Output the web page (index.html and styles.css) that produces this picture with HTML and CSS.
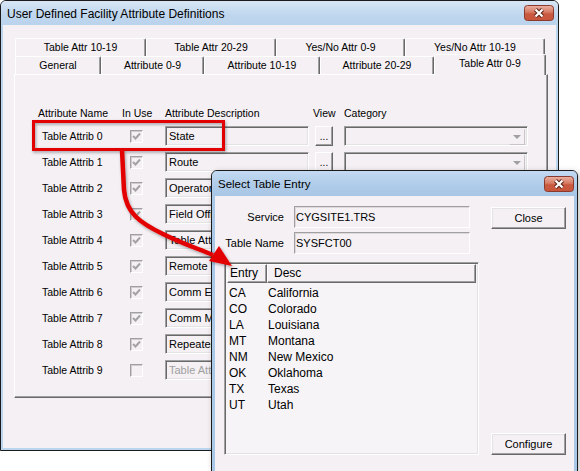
FILE: index.html
```html
<!DOCTYPE html>
<html>
<head>
<meta charset="utf-8">
<title>User Defined Facility Attribute Definitions</title>
<link rel="stylesheet" href="styles.css">
</head>
<body>
<div class="win main">
  <div class="titlebar">
    <span class="title">User Defined Facility Attribute Definitions</span>
    <svg class="xbtn" width="30" height="16" viewBox="0 0 30 16">
      <defs><linearGradient id="rg1" x1="0" y1="0" x2="0" y2="1"><stop offset="0" stop-color="#eab3a5"/><stop offset="0.45" stop-color="#d77a63"/><stop offset="0.55" stop-color="#c85a40"/><stop offset="1" stop-color="#c9553b"/></linearGradient></defs>
      <rect x="0.5" y="0.5" width="29" height="15" rx="3" fill="url(#rg1)" stroke="#8a3a2c"/>
      <path d="M11.5 4.5 L18.5 11.5 M18.5 4.5 L11.5 11.5" stroke="#5a2218" stroke-width="4.2"/>
      <path d="M11.5 4.5 L18.5 11.5 M18.5 4.5 L11.5 11.5" stroke="#fff" stroke-width="2.2"/>
    </svg>
  </div>
  <div class="client">
    <div class="tabctl">
      <div class="tabrow back">
        <div class="tab w131">Table Attr 10-19</div>
        <div class="tab w130">Table Attr 20-29</div>
        <div class="tab w129">Yes/No Attr 0-9</div>
        <div class="tab w140">Yes/No Attr 10-19</div>
      </div>
      <div class="tabrow front">
        <div class="tab w86">General</div>
        <div class="tab w103">Attribute 0-9</div>
        <div class="tab w116">Attribute 10-19</div>
        <div class="tab w114">Attribute 20-29</div>
        <div class="tab sel">Table Attr 0-9</div>
      </div>
      <div class="panel">
        <div class="grid">
          <div class="hd">Attribute Name</div><div class="hd">In Use</div><div class="hd">Attribute Description</div><div class="hd">View</div><div class="hd">Category</div>

          <div class="nm">Table Attrib 0</div><div><div class="cb"><svg width="9" height="9" viewBox="0 0 9 9"><path d="M1 4 L3.5 6.5 L8 1.5" fill="none" stroke="#a3a3a3" stroke-width="2"/></svg></div></div><div><div class="tb">State</div></div><div><div class="dots">...</div></div><div><div class="combo"><span class="dd"><span class="tri"></span></span></div></div>

          <div class="nm">Table Attrib 1</div><div><div class="cb"><svg width="9" height="9" viewBox="0 0 9 9"><path d="M1 4 L3.5 6.5 L8 1.5" fill="none" stroke="#a3a3a3" stroke-width="2"/></svg></div></div><div><div class="tb">Route</div></div><div><div class="dots">...</div></div><div><div class="combo"><span class="dd"><span class="tri"></span></span></div></div>

          <div class="nm">Table Attrib 2</div><div><div class="cb"><svg width="9" height="9" viewBox="0 0 9 9"><path d="M1 4 L3.5 6.5 L8 1.5" fill="none" stroke="#a3a3a3" stroke-width="2"/></svg></div></div><div><div class="tb">Operator</div></div><div><div class="dots"></div></div><div><div class="combo"><span class="dd"><span class="tri"></span></span></div></div>

          <div class="nm">Table Attrib 3</div><div><div class="cb"><svg width="9" height="9" viewBox="0 0 9 9"><path d="M1 4 L3.5 6.5 L8 1.5" fill="none" stroke="#a3a3a3" stroke-width="2"/></svg></div></div><div><div class="tb">Field Office</div></div><div><div class="dots"></div></div><div><div class="combo"><span class="dd"><span class="tri"></span></span></div></div>

          <div class="nm">Table Attrib 4</div><div><div class="cb"><svg width="9" height="9" viewBox="0 0 9 9"><path d="M1 4 L3.5 6.5 L8 1.5" fill="none" stroke="#a3a3a3" stroke-width="2"/></svg></div></div><div><div class="tb">Table Attrib 4</div></div><div><div class="dots"></div></div><div><div class="combo"><span class="dd"><span class="tri"></span></span></div></div>

          <div class="nm">Table Attrib 5</div><div><div class="cb"><svg width="9" height="9" viewBox="0 0 9 9"><path d="M1 4 L3.5 6.5 L8 1.5" fill="none" stroke="#a3a3a3" stroke-width="2"/></svg></div></div><div><div class="tb">Remote Equip</div></div><div><div class="dots"></div></div><div><div class="combo"><span class="dd"><span class="tri"></span></span></div></div>

          <div class="nm">Table Attrib 6</div><div><div class="cb"><svg width="9" height="9" viewBox="0 0 9 9"><path d="M1 4 L3.5 6.5 L8 1.5" fill="none" stroke="#a3a3a3" stroke-width="2"/></svg></div></div><div><div class="tb">Comm Equip</div></div><div><div class="dots"></div></div><div><div class="combo"><span class="dd"><span class="tri"></span></span></div></div>

          <div class="nm">Table Attrib 7</div><div><div class="cb"><svg width="9" height="9" viewBox="0 0 9 9"><path d="M1 4 L3.5 6.5 L8 1.5" fill="none" stroke="#a3a3a3" stroke-width="2"/></svg></div></div><div><div class="tb">Comm Medium</div></div><div><div class="dots"></div></div><div><div class="combo"><span class="dd"><span class="tri"></span></span></div></div>

          <div class="nm">Table Attrib 8</div><div><div class="cb"><svg width="9" height="9" viewBox="0 0 9 9"><path d="M1 4 L3.5 6.5 L8 1.5" fill="none" stroke="#a3a3a3" stroke-width="2"/></svg></div></div><div><div class="tb">Repeater</div></div><div><div class="dots"></div></div><div><div class="combo"><span class="dd"><span class="tri"></span></span></div></div>

          <div class="nm">Table Attrib 9</div><div><div class="cb"></div></div><div><div class="tb dis">Table Attrib 9</div></div><div><div class="dots"></div></div><div><div class="combo"><span class="dd"><span class="tri"></span></span></div></div>
        </div>
      </div>
    </div>
  </div>
</div>

<div class="win dlg">
  <div class="titlebar dtitle">
    <span class="title">Select Table Entry</span>
    <svg class="xbtn" width="30" height="16" viewBox="0 0 30 16">
      <defs><linearGradient id="rg2" x1="0" y1="0" x2="0" y2="1"><stop offset="0" stop-color="#eab3a5"/><stop offset="0.45" stop-color="#d77a63"/><stop offset="0.55" stop-color="#c85a40"/><stop offset="1" stop-color="#c9553b"/></linearGradient></defs>
      <rect x="0.5" y="0.5" width="29" height="15" rx="3" fill="url(#rg2)" stroke="#8a3a2c"/>
      <path d="M11.5 4.5 L18.5 11.5 M18.5 4.5 L11.5 11.5" stroke="#5a2218" stroke-width="4.2"/>
      <path d="M11.5 4.5 L18.5 11.5 M18.5 4.5 L11.5 11.5" stroke="#fff" stroke-width="2.2"/>
    </svg>
  </div>
  <div class="client dclient">
    <div class="dleft">
      <div class="form">
        <div class="lbl">Service</div><div class="field">CYGSITE1.TRS</div>
        <div class="lbl">Table Name</div><div class="field">SYSFCT00</div>
      </div>
      <div class="list">
        <div class="lhead"><div class="lh c1">Entry</div><div class="lh c2">Desc</div></div>
        <div class="litems">
          <div class="li"><span class="c1">CA</span><span>California</span></div>
          <div class="li"><span class="c1">CO</span><span>Colorado</span></div>
          <div class="li"><span class="c1">LA</span><span>Louisiana</span></div>
          <div class="li"><span class="c1">MT</span><span>Montana</span></div>
          <div class="li"><span class="c1">NM</span><span>New Mexico</span></div>
          <div class="li"><span class="c1">OK</span><span>Oklahoma</span></div>
          <div class="li"><span class="c1">TX</span><span>Texas</span></div>
          <div class="li"><span class="c1">UT</span><span>Utah</span></div>
        </div>
      </div>
    </div>
    <div class="dright">
      <div class="btn close">Close</div>
      <div class="btn">Configure</div>
    </div>
  </div>
</div>

<svg class="overlay" width="580" height="471" viewBox="0 0 580 471">
  <defs>
    <filter id="sh" x="-20%" y="-20%" width="140%" height="140%">
      <feDropShadow dx="1" dy="1.5" stdDeviation="1.6" flood-color="#000" flood-opacity="0.35"/>
    </filter>
  </defs>
  <rect x="33.5" y="121.5" width="190" height="28" fill="none" stroke="#e30000" stroke-width="3" filter="url(#sh)"/>
  <g filter="url(#sh)">
    <path d="M122 150 L124 190 C126 213 140 223 163 234 C183 244 199 249 213 255" fill="none" stroke="#e30000" stroke-width="4.5"/>
    <polygon points="232,266 209,261 219,246" fill="#e30000"/>
  </g>
</svg>
</body>
</html>
```
FILE: styles.css
```css
* { box-sizing: border-box; }

body {
  margin: 0;
  width: 580px;
  height: 471px;
  overflow: hidden;
  position: relative;
  background: #ffffff;
  font-family: "Liberation Sans", Arial, sans-serif;
  color: #000;
}

.win {
  position: absolute;
  display: flex;
  flex-direction: column;
  border: 1px solid #1b1b1b;
  border-radius: 6px 6px 0 0;
  background: #bcd5ee;
}

.main {
  left: 0;
  top: 0;
  width: 559px;
  height: 451px;
}

.dlg {
  left: 211px;
  top: 170px;
  width: 367px;
  height: 302px;
  background: #a9c8e8;
  box-shadow: 2px 2px 6px rgba(0,0,0,0.25);
}

.titlebar {
  height: 24px;
  flex: none;
  display: flex;
  align-items: center;
  justify-content: space-between;
  padding: 0 4px 0 6px;
  border-radius: 5px 5px 0 0;
  background: linear-gradient(#d7e6f5, #bfd6ee 60%, #bad3ec);
  font-size: 12px;
}

.title { padding-top: 1px; }

.xbtn { display: block; }

.dtitle {
  height: 25px;
  padding: 0 3px 0 6px;
  font-size: 11.5px;
  background: linear-gradient(#c3daf1, #aecbe9 60%, #a8c6e6);
}

.client {
  flex: 1;
  margin: 0 2px 2px;
  background: #f4f0f4;
}

/* ---- tab control ---- */
.tabctl {
  margin: 13px 0 0 11px;
  width: 534px;
}

.tabrow {
  display: flex;
  height: 18px;
}

.tabrow.back { margin: 0 3px 0 1px; }

.tabrow.front {
  margin-left: 1px;
  position: relative;
  z-index: 1;
}

.tab {
  flex: none;
  height: 18px;
  border: 1px solid;
  border-color: #ffffff #696969 transparent #ffffff;
  border-bottom: 0;
  box-shadow: inset -1px 0 #a0a0a0;
  border-radius: 2px 2px 0 0;
  background: #f4f0f4;
  text-align: center;
  font-size: 10.5px;
  line-height: 16px;
  white-space: nowrap;
}

.w131 { width: 131px; }
.w130 { width: 130px; }
.w129 { width: 129px; }
.w140 { width: 140px; }
.w86 { width: 86px; }
.w103 { width: 103px; }
.w116 { width: 116px; }
.w114 { width: 114px; }

.tab.sel {
  width: 112px;
  height: 21px;
  margin-top: -2px;
  line-height: 17px;
}

.panel {
  height: 324px;
  border: 1px solid;
  border-color: #ffffff #696969 #696969 #ffffff;
  box-shadow: inset -1px -1px #a0a0a0;
  padding: 31px 0 0 23px;
}

.grid {
  display: grid;
  grid-template-columns: 84px 43px 148px 31px 184px;
  grid-template-rows: 14px repeat(10, 20px);
  row-gap: 6px;
  font-size: 10.5px;
}

.hd {
  line-height: 14px;
  white-space: nowrap;
}

.nm {
  padding-left: 4px;
  line-height: 20px;
  white-space: nowrap;
}

.cb {
  width: 13px;
  height: 13px;
  margin: 4px 0 0 8px;
  border: 1px solid;
  border-color: #a0a0a0 #ffffff #ffffff #a0a0a0;
  box-shadow: inset 1px 1px #cfcbcf, inset -1px -1px #f4f0f4;
  background: #f4f0f4;
  display: flex;
  align-items: center;
  justify-content: center;
}

.cb svg { display: block; }

.tb {
  width: 144px;
  height: 20px;
  border: 1px solid;
  border-color: #a0a0a0 #ffffff #ffffff #a0a0a0;
  box-shadow: inset 1px 1px #696969, inset -1px -1px #e3e3e3;
  padding-left: 3px;
  line-height: 18px;
  white-space: nowrap;
  overflow: hidden;
  font-size: 11px;
}

.tb.dis { color: #a0a0a0; }

.dots {
  width: 18px;
  height: 20px;
  margin-left: 2px;
  border: 1px solid;
  border-color: #ffffff #696969 #696969 #ffffff;
  box-shadow: inset -1px -1px #a0a0a0;
  text-align: center;
  line-height: 20px;
  font-size: 10px;
}

.combo {
  width: 184px;
  height: 20px;
  border: 1px solid;
  border-color: #a0a0a0 #ffffff #ffffff #a0a0a0;
  box-shadow: inset 1px 1px #696969, inset -1px -1px #e3e3e3;
  display: flex;
  justify-content: flex-end;
  padding: 2px;
}

.dd {
  width: 16px;
  height: 16px;
  border: 1px solid;
  border-color: #f4f0f4 #c8c4c8 #c8c4c8 #f4f0f4;
  display: flex;
  align-items: center;
  justify-content: center;
}

.tri {
  width: 0;
  height: 0;
  border-left: 4px solid transparent;
  border-right: 4px solid transparent;
  border-top: 4px solid #a0a0a0;
}

/* ---- dialog ---- */
.dclient {
  margin: 0 3px 0;
  display: flex;
  padding: 10px 0 0 9px;
}

.dleft { width: 255px; flex: none; }

.form {
  display: grid;
  grid-template-columns: 60px 176px;
  column-gap: 10px;
  row-gap: 4px;
  grid-auto-rows: 22px;
  align-items: center;
  font-size: 11px;
}

.lbl {
  text-align: right;
  white-space: nowrap;
}

.field {
  height: 22px;
  border: 1px solid;
  border-color: #a0a0a0 #ffffff #ffffff #a0a0a0;
  box-shadow: inset 1px 1px #dcd8dc, inset -1px -1px #f4f0f4;
  padding-left: 1px;
  line-height: 20px;
}

.list {
  margin-top: 8px;
  height: 193px;
  border: 1px solid;
  border-color: #a0a0a0 #ffffff #ffffff #a0a0a0;
  box-shadow: inset 1px 1px #696969, inset -1px -1px #e3e3e3;
  padding: 1px 2px 2px 2px;
  background: #f7f4f7;
  font-size: 12px;
}

.lhead {
  display: flex;
  height: 19px;
}

.lh {
  height: 19px;
  border: 1px solid;
  border-color: #ffffff #696969 #696969 #ffffff;
  box-shadow: inset -1px -1px #a0a0a0;
  background: #f4f0f4;
  padding-left: 2px;
  line-height: 17px;
}

.lh.c1 { width: 40px; }
.lh.c2 { flex: 1; padding-left: 6px; }

.litems { padding-top: 2px; }

.li {
  display: flex;
  height: 16px;
  line-height: 16px;
  padding-left: 2px;
}

.li .c1 { width: 39px; }

.dright {
  margin-left: 12px;
  width: 75px;
  height: 249px;
  display: flex;
  flex-direction: column;
  justify-content: space-between;
}

.btn {
  height: 22px;
  border: 1px solid;
  border-color: #ffffff #696969 #696969 #ffffff;
  box-shadow: inset -1px -1px #a0a0a0, inset 1px 1px #e3e3e3;
  background: #f4f0f4;
  text-align: center;
  line-height: 20px;
  font-size: 11px;
}

.btn.close { margin-top: 1px; }

.overlay {
  position: absolute;
  left: 0;
  top: 0;
  pointer-events: none;
}
```
